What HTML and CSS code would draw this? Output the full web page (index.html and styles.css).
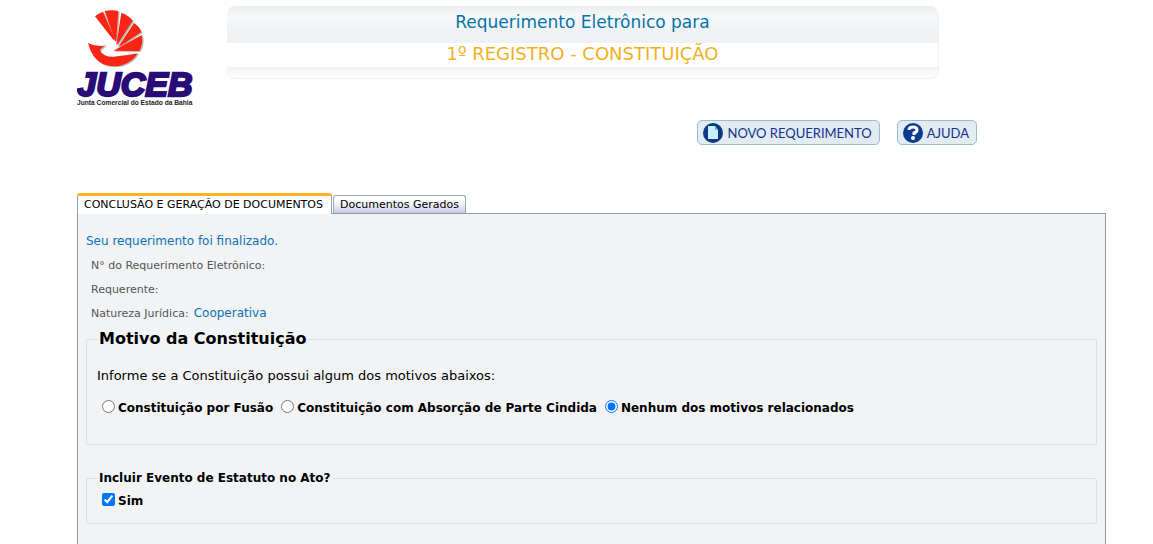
FILE: index.html
```html
<!DOCTYPE html>
<html lang="pt-BR">
<head>
    <meta charset="UTF-8">
    <meta name="viewport" content="width=device-width, initial-scale=1.0">
    <title>Requerimento Eletrônico - JUCEB</title>
    <link rel="stylesheet" href="styles.css">
</head>
<body>
    <header class="header">
        <svg class="logo" viewBox="21 28 351 291" role="img" aria-label="JUCEB">
            <g class="shell-shadow" transform="translate(4 3)">
                <use href="#shell"/>
            </g>
            <g id="shell" class="shell">
                <path d="M75 47 Q86 38 99 33 L133 112 L131 119 Z"/>
                <path d="M104 31 Q125 27 145 31 L139 118 L136 123 Z"/>
                <path d="M154 36 Q175 43 188 60 L143 130 L139 132 Z"/>
                <path d="M192 67 Q208 78 214 94 L152 135 L145 138 Z"/>
                <path d="M215 103 Q221 128 208 151 L130 150 Z"/>
                <path d="M54 127 Q80 141 111 134 Q93 139 90 150 Q98 168 130 168 Q165 166 203 158 Q190 182 158 193 Q130 202 100 191 Q66 176 54 127 Z"/>
            </g>
            <text class="logo-name" x="22" y="285">JUCEB</text>
            <text class="logo-tag" x="21" y="313">Junta Comercial do Estado da Bahia</text>
        </svg>
        <div class="banner">
            <h1 class="banner-title">Requerimento Eletrônico para</h1>
            <h2 class="banner-sub">1º REGISTRO - CONSTITUIÇÃO</h2>
            <div class="banner-foot"></div>
        </div>
    </header>

    <nav class="actions">
        <button type="button" class="action">
            <svg class="action-icon" viewBox="0 0 20 20">
                <circle cx="10" cy="10" r="10" fill="#0b3a82"/>
                <path d="M5 3 H12 L15 7 V16 H5 Z" fill="#c9effc"/>
                <path d="M12 3 V7 H15 Z" fill="#6fb4de"/>
            </svg>
            NOVO REQUERIMENTO
        </button>
        <button type="button" class="action">
            <svg class="action-icon" viewBox="0 0 20 20">
                <circle cx="10" cy="10" r="10" fill="#0b3a92"/>
                <path d="M6 7 Q6 4 10 4 Q14 4 14 7 Q14 9 11 10 V12" fill="none" stroke="#fff" stroke-width="3"/>
                <circle cx="10" cy="15" r="2" fill="#fff"/>
            </svg>
            AJUDA
        </button>
    </nav>

    <div class="tabs">
        <button type="button" class="tab tab-active">CONCLUSÃO E GERAÇÃO DE DOCUMENTOS</button>
        <button type="button" class="tab">Documentos Gerados</button>
    </div>

    <main class="panel">
        <p class="status">Seu requerimento foi finalizado.</p>
        <dl class="info">
            <div class="info-row"><dt>N° do Requerimento Eletrônico:</dt><dd></dd></div>
            <div class="info-row"><dt>Requerente:</dt><dd></dd></div>
            <div class="info-row"><dt>Natureza Jurídica:</dt><dd>Cooperativa</dd></div>
        </dl>

        <fieldset class="box box-reason">
            <legend class="legend-big">Motivo da Constituição</legend>
            <p class="question">Informe se a Constituição possui algum dos motivos abaixos:</p>
            <div class="options">
                <label class="option"><input type="radio" name="motivo">Constituição por Fusão</label>
                <label class="option"><input type="radio" name="motivo">Constituição com Absorção de Parte Cindida</label>
                <label class="option"><input type="radio" name="motivo" checked>Nenhum dos motivos relacionados</label>
            </div>
        </fieldset>

        <fieldset class="box box-event">
            <legend>Incluir Evento de Estatuto no Ato?</legend>
            <label class="option"><input type="checkbox" checked>Sim</label>
        </fieldset>
    </main>
</body>
</html>
```
FILE: styles.css
```css
* {
    box-sizing: border-box;
}
body {
    margin: 0;
    padding: 6px 47px 0 77px;
    min-height: 100vh;
    display: flex;
    flex-direction: column;
    background: #fff;
    color: #000;
    font-family: Verdana, "DejaVu Sans", sans-serif;
    font-size: 12px;
}
h1, h2, p, dl, dd {
    margin: 0;
}
button {
    font-family: inherit;
    cursor: pointer;
}

/* header */
.header {
    display: flex;
    align-items: flex-start;
    gap: 33px;
}
.logo {
    flex: none;
    width: 117px;
    margin-top: 4px;
}
.shell {
    fill: #fc2413;
}
.shell-shadow {
    filter: grayscale(1);
    opacity: 0.4;
}
.logo-name {
    font: italic bold 102px "Liberation Sans", Arial, sans-serif;
    fill: #2a0c78;
    stroke: #2a0c78;
    stroke-width: 7px;
}
.logo-tag {
    font: bold 20px "Liberation Sans", Arial, sans-serif;
    fill: #222;
}
.banner {
    flex: 1;
    max-width: 712px;
    text-align: center;
    border-right: 1px solid #eef0f1;
    border-radius: 10px;
}
.banner-title,
.banner-sub {
    font-weight: normal;
}
.banner-title {
    height: 37px;
    font-size: 17px;
    line-height: 33px;
    color: #0474a8;
    background: linear-gradient(#ebeeee, #f8f9fa 30%, #f0f2f4 60%, #eff1f3);
    border-radius: 8px 8px 0 0;
}
.banner-sub {
    height: 24px;
    font-size: 18px;
    line-height: 22px;
    color: #f2b01e;
}
.banner-foot {
    height: 12px;
    background: linear-gradient(#f1f3f3, #fff);
    border-bottom: 1px solid #eef0f1;
    border-radius: 0 0 8px 8px;
}

/* action buttons */
.actions {
    display: flex;
    justify-content: flex-end;
    gap: 17px;
    margin: 13px 129px 0 0;
}
.action {
    display: flex;
    align-items: center;
    gap: 4px;
    height: 25px;
    padding: 0 7px 0 5px;
    border: 1px solid #9dbdcd;
    border-radius: 5px;
    background: #e1ebf0;
    color: #15318f;
    font-family: Lato, sans-serif;
    font-size: 13px;
    white-space: nowrap;
}
.action-icon {
    width: 20px;
    height: 20px;
}

/* tabs */
.tabs {
    display: flex;
    align-items: flex-end;
    gap: 1px;
    margin-top: 48px;
}
.tab {
    height: 18px;
    padding: 0 6px;
    border: 1px solid #91a7b4;
    border-bottom: none;
    border-radius: 3px 3px 0 0;
    background: linear-gradient(#fff 30%, #c8c9e4);
    color: #000;
    font-size: 11px;
    white-space: nowrap;
}
.tab-active {
    z-index: 1;
    height: 21px;
    margin-bottom: -1px;
    padding: 0 8px 2px 6px;
    border-top: 3px solid #ffb31f;
    background: #fff;
}

/* panel */
.panel {
    flex: 1;
    padding: 19px 8px;
    border: 1px solid #919b9c;
    border-bottom: none;
    background: #f1f3f5;
}
.status {
    line-height: 16px;
    color: #0b71b5;
}
.info {
    padding: 4px 5px;
}
.info-row {
    display: flex;
    align-items: center;
    gap: 5px;
    height: 24px;
}
.info dt {
    font-size: 11px;
    color: #555;
}
.info dd {
    color: #0b71b5;
}
.box {
    margin: 0;
    padding: 0 10px;
    border: 1px solid #dbdddf;
    border-radius: 2px;
}
.box legend {
    padding: 0 2px;
    font-weight: bold;
    line-height: 18px;
}
.box .legend-big {
    font-size: 16px;
    line-height: 20px;
}
.box-reason {
    height: 116px;
}
.box-event {
    height: 55px;
    margin-top: 24px;
}
.question {
    margin: 18px 0 14px;
    font-size: 13px;
    line-height: 18px;
}
.options {
    display: flex;
    gap: 3px;
}
.option {
    display: flex;
    align-items: center;
    font-weight: bold;
    line-height: 18px;
    white-space: nowrap;
}
.box-event .option {
    margin-top: 5px;
}
.option input {
    width: 13px;
    height: 13px;
    margin: 0 3px 3px 5px;
    accent-color: #0075ff;
}
```
